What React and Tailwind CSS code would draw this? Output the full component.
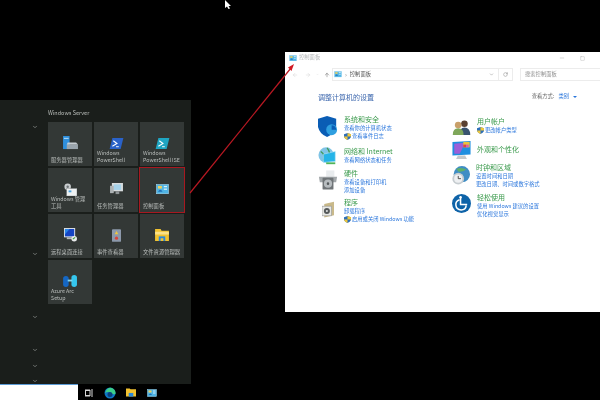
import { ChevronDown, ArrowLeft, ArrowRight, ArrowUp, RotateCw, Minus, Square } from 'lucide-react';

const font = { fontFamily: '"Noto Sans CJK SC", "Noto Sans", sans-serif' };

function PanelIcon({ size = 16 }) {
  return (
    <svg width={size} height={size * 0.8} viewBox="0 0 20 16">
      <rect x="1" y="1" width="18" height="14" fill="#4fb4e4" stroke="#9fd8f2" />
      <rect x="3" y="3" width="6" height="4" fill="#f3d15a" />
      <path d="M3 12 Q7 6 10 12 Z" fill="#1f6fb8" />
      <rect x="12" y="3" width="5" height="2" fill="#d7f0fb" />
      <rect x="12" y="7" width="5" height="2" fill="#d7f0fb" />
    </svg>
  );
}

function PsIcon({ light }) {
  return (
    <svg width="15" height="11" viewBox="0 0 15 12">
      <path d="M3 0H15L12 12H0Z" fill={light ? '#1fa5c2' : '#2a62c9'} />
      <path d="M4 3L8 6L3 9" stroke="#fff" strokeWidth="1.2" fill="none" />
      <path d="M7 9.5H10" stroke="#fff" strokeWidth="1" />
    </svg>
  );
}

const tileIcons = {
  server: (
    <svg width="15" height="14" viewBox="0 0 16 15">
      <rect x="0" y="0" width="7" height="14" fill="#2f8fdc" />
      <rect x="1" y="2" width="5" height="1" fill="#bfe2fb" />
      <path d="M4 9H16V14H4Z" fill="#9aa5ad" />
      <path d="M5 7H14L16 9H4Z" fill="#c7ced3" />
    </svg>
  ),
  tools: (
    <svg width="14" height="13" viewBox="0 0 15 14">
      <circle cx="5" cy="4" r="3.5" fill="#c9cdcf" />
      <circle cx="5" cy="4" r="1.3" fill="#6c7275" />
      <rect x="4" y="6" width="11" height="8" fill="#eef1f2" stroke="#8f9698" strokeWidth="0.5" />
      <rect x="6" y="8" width="3" height="2" fill="#4aa3df" />
    </svg>
  ),
  task: (
    <svg width="13" height="12" viewBox="0 0 14 13">
      <rect x="2" y="0" width="12" height="9" fill="#d8dcde" />
      <rect x="4" y="1.5" width="8" height="6" fill="#a6d2ea" />
      <rect x="0" y="3" width="4" height="8" fill="#aeb3b5" />
      <rect x="6" y="9" width="4" height="3" fill="#8f9496" />
    </svg>
  ),
  remote: (
    <svg width="13" height="14" viewBox="0 0 14 15">
      <rect x="0" y="0" width="12" height="10" fill="#e4e7e9" />
      <rect x="1" y="1" width="10" height="8" fill="#1544c4" />
      <path d="M1 1H6L1 7Z" fill="#2a86e8" />
      <rect x="3" y="10" width="6" height="2" fill="#b5babc" />
      <circle cx="11" cy="11.5" r="3" fill="#e8eaeb" />
      <path d="M9.5 12L12 10" stroke="#3c9a3c" strokeWidth="1.2" />
    </svg>
  ),
  event: (
    <svg width="9" height="13" viewBox="0 0 10 14">
      <rect x="0" y="0" width="10" height="14" rx="1" fill="#8d99ab" />
      <path d="M5 2L7 5.5H3Z" fill="#f0c83c" />
      <circle cx="5" cy="10" r="1.8" fill="#d8443a" />
    </svg>
  ),
  folder: (
    <svg width="14" height="12" viewBox="0 0 15 13">
      <path d="M0 0H6L7 2H15V13H0Z" fill="#f2c230" />
      <rect x="0" y="3" width="15" height="3" fill="#fbe189" />
      <rect x="4" y="8" width="7" height="5" fill="#2b88d8" />
      <rect x="6" y="10" width="3" height="3" fill="#f2c230" />
    </svg>
  ),
  azure: (
    <svg width="15" height="12" viewBox="0 0 16 13">
      <rect x="0" y="1" width="6" height="12" rx="3" fill="#1567c4" />
      <rect x="9" y="0" width="6" height="13" rx="3" fill="#35c6ee" />
      <rect x="5" y="5" width="5" height="2" fill="#7fd6f0" />
    </svg>
  ),
};

const tiles = [
  { icon: tileIcons.server, label: '服务器管理器' },
  { icon: <PsIcon />, label: 'Windows PowerShell' },
  { icon: <PsIcon light />, label: 'Windows PowerShell ISE' },
  { icon: tileIcons.tools, label: 'Windows 管理工具' },
  { icon: tileIcons.task, label: '任务管理器' },
  { icon: <PanelIcon size={13} />, label: '控制面板', active: true },
  { icon: tileIcons.remote, label: '远程桌面连接' },
  { icon: tileIcons.event, label: '事件查看器' },
  { icon: tileIcons.folder, label: '文件资源管理器' },
  { icon: tileIcons.azure, label: 'Azure Arc Setup' },
];

function Tile({ icon, label, active }) {
  return (
    <div className={`w-[44px] h-[44px] bg-[#333836] flex flex-col ${active ? 'outline outline-1 outline-[#a81820]' : ''}`}>
      <div className="h-[28px] pt-[14px] shrink-0 flex items-center justify-center">{icon}</div>
      <div className="flex-1 flex flex-col justify-end px-[3px] pb-[2px]">
        <div className="text-[5.3px] leading-[7px] text-[#b9bdbb]">{label}</div>
      </div>
    </div>
  );
}

function Shield() {
  return (
    <svg width="7" height="7" viewBox="0 0 8 8" className="shrink-0">
      <path d="M4 0L8 1.5V4.5Q7 7 4 8Q1 7 0 4.5V1.5Z" fill="#2d6fb8" />
      <path d="M4 0L8 1.5V4H4V8Q1 7 0 4.5V4H4Z" fill="#f0c83c" />
    </svg>
  );
}

const catIcons = {
  security: (
    <svg width="20" height="21" viewBox="0 0 22 23">
      <path d="M10 0L20 3V12Q18 20 10 23Q2 20 0 12V3Z" fill="#0a5db5" />
      <circle cx="15" cy="15" r="6" fill="#2f9fe0" />
      <path d="M15 15V10A5 5 0 0 1 20 15Z" fill="#0a5db5" />
    </svg>
  ),
  network: (
    <svg width="20" height="20" viewBox="0 0 22 20">
      <circle cx="9" cy="9" r="8.5" fill="#7fc4e6" />
      <path d="M3 5Q9 9 6 15M10 1Q14 6 12 10" stroke="#3f9a58" strokeWidth="1.5" fill="none" />
      <path d="M6 8L19 5V16L6 17Z" fill="#25b4e8" stroke="#b9e5f6" strokeWidth="0.6" />
      <rect x="9" y="17" width="10" height="2" fill="#4fb45a" />
    </svg>
  ),
  hardware: (
    <svg width="20" height="20" viewBox="0 0 22 21">
      <rect x="9" y="0" width="9" height="7" fill="#e9ecee" />
      <path d="M1 7H21L20 13H2Z" fill="#a3a8ab" />
      <rect x="5" y="8" width="12" height="13" rx="1" fill="#6f7477" />
      <circle cx="11" cy="14.5" r="4.5" fill="#b7bcbf" />
      <circle cx="11" cy="14.5" r="1.4" fill="#555a5c" />
    </svg>
  ),
  programs: (
    <svg width="15" height="17" viewBox="0 0 20 21">
      <path d="M3 3L16 0V18L3 21Z" fill="#c9b98a" />
      <rect x="0" y="6" width="13" height="13" fill="#e7e8e4" stroke="#777" strokeWidth="0.6" />
      <circle cx="6.5" cy="12.5" r="4" fill="#55595a" />
      <circle cx="6.5" cy="12.5" r="1.4" fill="#dcdedd" />
    </svg>
  ),
  users: (
    <svg width="19" height="15" viewBox="0 0 21 18">
      <circle cx="14" cy="4.5" r="4" fill="#5a4030" />
      <path d="M8 18Q8 9 14 9Q21 9 21 18Z" fill="#39536e" />
      <circle cx="6.5" cy="6" r="4" fill="#c9a06a" />
      <path d="M0 18Q0 10 6.5 10Q13 10 13 18Z" fill="#7fa75a" />
    </svg>
  ),
  appearance: (
    <svg width="19" height="19" viewBox="0 0 20 21">
      <path d="M0 1L20 0V15L0 16Z" fill="#1f8fe0" />
      <path d="M2 3L14 2L8 14H2Z" fill="#9c5fd8" />
      <rect x="12" y="1" width="7" height="6" fill="#e8c33c" />
      <rect x="12" y="4" width="3" height="3" fill="#d8434a" />
      <rect x="15" y="4" width="3" height="3" fill="#d85fb0" />
      <path d="M6 16H14L16 20H4Z" fill="#c4c9cc" />
    </svg>
  ),
  clock: (
    <svg width="21" height="19" viewBox="0 0 21 21">
      <circle cx="12" cy="9" r="9" fill="#3f8dc4" />
      <path d="M6 3Q12 1 17 4Q13 7 8 6Z" fill="#5fb06a" />
      <circle cx="8" cy="14" r="6.5" fill="#c6ccd0" />
      <circle cx="8" cy="14" r="4.5" fill="#eef0f2" />
      <path d="M8 11V14H11" stroke="#444" strokeWidth="1" fill="none" />
    </svg>
  ),
  access: (
    <svg width="19" height="19" viewBox="0 0 20 20">
      <circle cx="10" cy="10" r="10" fill="#0e63a8" />
      <path d="M8 6A5.5 5.5 0 1 0 15 12" stroke="#fff" strokeWidth="1.6" fill="none" />
      <path d="M9 3V11H16" stroke="#fff" strokeWidth="1.6" fill="none" />
      <circle cx="9" cy="3.5" r="1.3" fill="#fff" />
    </svg>
  ),
};

function Category({ icon, iconClass, title, links, h }) {
  return (
    <div className={`flex ${h}`}>
      <div className={`w-[26px] flex items-start shrink-0 ${iconClass}`}>{icon}</div>
      <div>
        <div className="text-[7px] leading-[10px] text-[#3a9a4c] whitespace-nowrap">{title}</div>
        {links.map((l) => (
          <div key={l.text} className="flex items-center gap-[1px] text-[5.3px] leading-[8px] text-[#2a76dc] whitespace-nowrap">
            {l.shield && <Shield />}
            {l.text}
          </div>
        ))}
      </div>
    </div>
  );
}

export default function App() {
  return (
    <div className="relative w-[600px] h-[400px] overflow-hidden bg-black flex blur-[0.5px]" style={font}>
      {/* start menu */}
      <div className="w-[191px] h-full pt-[100px] flex flex-col shrink-0">
        <div className="flex-1 bg-[#1a1e1b] flex">
          <div className="w-[48px] flex flex-col items-center text-[#8b8f8c]">
            <ChevronDown size={6} strokeWidth={3} className="mt-[24px] ml-[21px]" />
            <ChevronDown size={6} strokeWidth={3} className="mt-[121px] ml-[21px]" />
            <ChevronDown size={6} strokeWidth={3} className="mt-[57px] ml-[21px]" />
            <ChevronDown size={6} strokeWidth={3} className="mt-[27px] ml-[21px]" />
            <ChevronDown size={6} strokeWidth={3} className="mt-[10px] ml-[21px]" />
            <ChevronDown size={6} strokeWidth={3} className="mt-[9px] ml-[21px] shrink-0" />
          </div>
          <div>
            <div className="h-[22px] pt-[9px] text-[5.5px] leading-[8px] text-[#b9bdba]">Windows Server</div>
            <div className="grid grid-cols-[44px_44px_44px] gap-[2px]">
              {tiles.map((t) => (
                <Tile key={t.label} {...t} />
              ))}
            </div>
          </div>
        </div>
        {/* taskbar */}
        <div className="h-[17px] flex bg-black shrink-0">
          <div className="w-[78px] h-full bg-white border-t border-t-[#5b9bd5] border-b border-b-[#b9d3ea]" />
          <div className="flex items-center">
            <svg width="8" height="8" viewBox="0 0 8 8" className="ml-[7px]">
              <rect x="0.5" y="1.5" width="4.5" height="5" fill="none" stroke="#d6d6d6" />
              <path d="M0 0H5M0 8H5M7 0V8" stroke="#d6d6d6" />
            </svg>
            <svg width="12" height="12" viewBox="0 0 12 12" className="ml-[11px]">
              <circle cx="6" cy="6" r="5.5" fill="#0f76c4" />
              <path d="M1 6Q3 0 8 1Q12 3 11.5 7Q9 8 7 6Q4 4 1 6Z" fill="#3ccf8a" />
              <circle cx="6" cy="7.5" r="2.5" fill="#0b3f7a" />
            </svg>
            <svg width="10" height="9" viewBox="0 0 11 9" className="ml-[10px]">
              <path d="M0 0H4L5 1H11V9H0Z" fill="#f2c230" />
              <rect x="3" y="5" width="5" height="4" fill="#2b88d8" />
            </svg>
            <div className="ml-[11px] relative h-full flex items-center">
              <PanelIcon size={10} />
              <div className="absolute bottom-0 -left-[4px] -right-[4px] h-[1px] bg-[#7a8a94]" />
            </div>
          </div>
        </div>
      </div>

      {/* control panel window */}
      <div className="ml-[94px] mt-[52px] w-[315px] h-[260px] bg-white shrink-0 flex flex-col">
        <div className="h-[12px] flex items-center pl-[4px]">
          <PanelIcon size={8} />
          <span className="ml-[2px] text-[5.3px] text-[#b4b7b9]">控制面板</span>
          <div className="ml-auto flex items-center gap-[15px] pr-[15px] text-[#9a9a9a]">
            <Minus size={6} strokeWidth={1.5} />
            <Square size={5} strokeWidth={1.5} />
          </div>
        </div>
        <div className="h-[13px] flex items-center pl-[7px] mt-[4px]">
          <ArrowLeft size={6} className="text-[#c9c9c9]" strokeWidth={1.5} />
          <ArrowRight size={6} className="ml-[7px] text-[#c9c9c9]" strokeWidth={1.5} />
          <ChevronDown size={3} className="ml-[5px] text-[#c9c9c9]" strokeWidth={2} />
          <ArrowUp size={6} className="ml-[5px] text-[#666]" strokeWidth={2} />
          <div className="ml-[2px] w-[167px] h-[13px] border border-[#ececec] flex items-center pl-[1px] pr-[4px]">
            <PanelIcon size={8} />
            <span className="ml-[3px] text-[6px] text-[#888]">›</span>
            <span className="ml-[3px] text-[5.3px] text-[#555]">控制面板</span>
            <ChevronDown size={5} className="ml-auto text-[#777]" strokeWidth={2} />
          </div>
          <div className="w-[14px] h-[13px] border border-l-0 border-[#ececec] flex items-center justify-center">
            <RotateCw size={5} className="text-[#777]" strokeWidth={2} />
          </div>
          <div className="ml-[7px] flex-1 h-[13px] border border-r-0 border-[#ececec] flex items-center pl-[4px] text-[5.3px] text-[#8f8f8f]">
            搜索控制面板
          </div>
        </div>
        <div className="flex items-center justify-between pl-[33px] pr-[23px] mt-[11px] h-[10px]">
          <span className="text-[7px] text-[#3b66ad]">调整计算机的设置</span>
          <div className="flex items-center text-[5.3px]">
            <span className="text-[#666]">查看方式:</span>
            <span className="ml-[4px] text-[#2a76dc]">类别</span>
            <span className="ml-[4px] w-0 h-0 border-x-[2px] border-x-transparent border-t-[2px] border-t-[#2a76dc]" />
          </div>
        </div>
        <div className="flex mt-[12px] pl-[33px]">
          <div className="w-[133px] flex flex-col">
            <Category
              h="h-[32px]"
              iconClass="pt-[2px]"
              icon={catIcons.security}
              title="系统和安全"
              links={[{ text: '查看你的计算机状态' }, { text: '查看事件日志', shield: true }]}
            />
            <Category h="h-[22px]" iconClass="" icon={catIcons.network} title="网络和 Internet" links={[{ text: '查看网络状态和任务' }]} />
            <Category h="h-[29px]" iconClass="pt-[2px]" icon={catIcons.hardware} title="硬件" links={[{ text: '查看设备和打印机' }, { text: '添加设备' }]} />
            <Category
              h="h-[29px]"
              iconClass="pt-[4px] pl-[4px]"
              icon={catIcons.programs}
              title="程序"
              links={[{ text: '卸载程序' }, { text: '启用或关闭 Windows 功能', shield: true }]}
            />
          </div>
          <div className="flex flex-col mt-[2px]">
            <Category h="h-[28px]" iconClass="pt-[4px] pl-[1px]" icon={catIcons.users} title="用户帐户" links={[{ text: '更改帐户类型', shield: true }]} />
            <Category h="h-[18px]" iconClass="-mt-[3px] pl-[1px]" icon={catIcons.appearance} title="外观和个性化" links={[]} />
            <Category h="h-[30px]" iconClass="pt-[4px] -ml-[1px]" icon={catIcons.clock} title="时钟和区域" links={[{ text: '设置时间和日期' }, { text: '更改日期、时间或数字格式' }]} />
            <Category h="h-[29px]" iconClass="pt-[2px] pl-[1px]" icon={catIcons.access} title="轻松使用" links={[{ text: '使用 Windows 建议的设置' }, { text: '优化视觉显示' }]} />
          </div>
        </div>
      </div>

      {/* red callout arrow + mouse pointer */}
      <svg width="600" height="400" viewBox="0 0 600 400" className="absolute inset-0 pointer-events-none">
        <path d="M190 193L291 68" stroke="#b81822" strokeWidth="1.2" />
        <path d="M294 64L288 67.5L291.5 71Z" fill="#d01822" />
        <path d="M225 0V8L227 6.5L228.5 9L230 8.5L228.5 6H231Z" fill="#fff" />
      </svg>
    </div>
  );
}
